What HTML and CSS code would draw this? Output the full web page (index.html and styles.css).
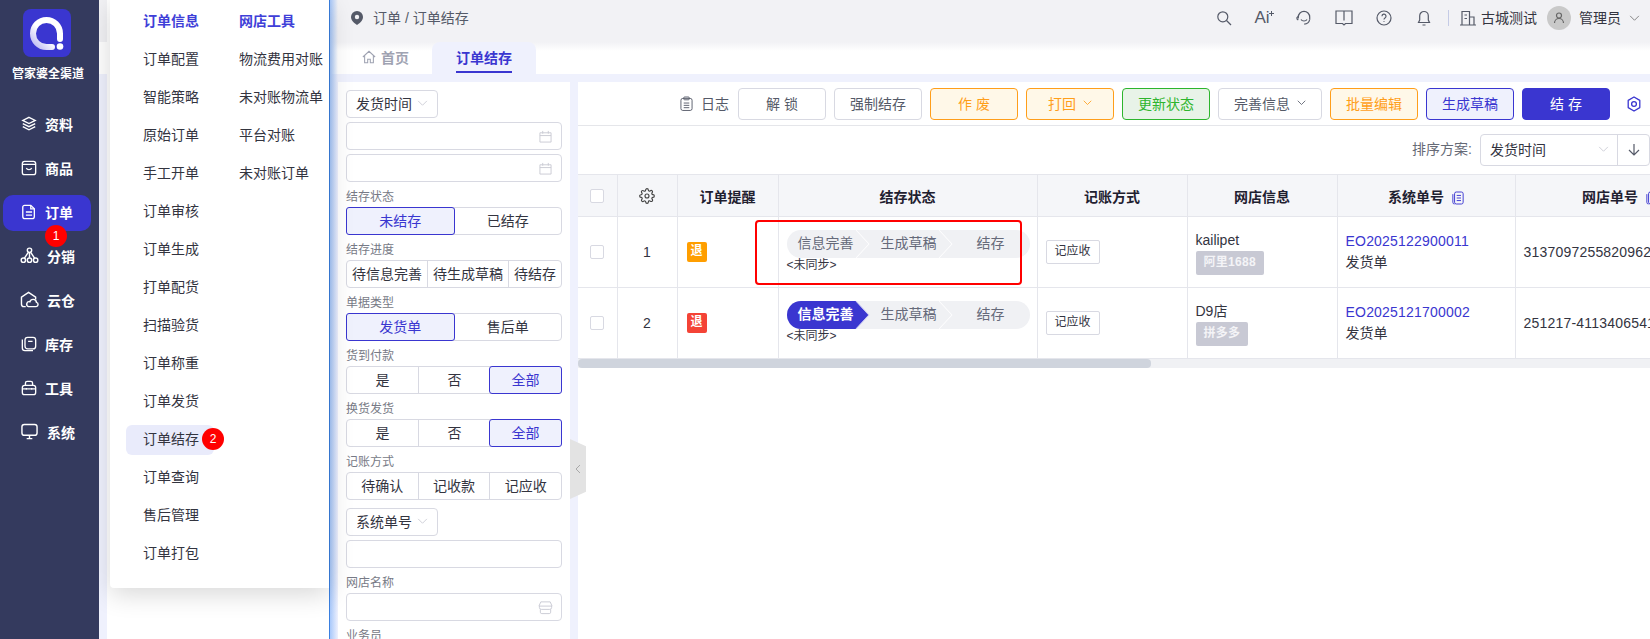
FILE: index.html
```html
<!DOCTYPE html>
<html lang="zh-CN">
<head>
<meta charset="utf-8">
<title>订单结存</title>
<link rel="stylesheet" href="styles.css">
</head>
<body>
<aside class="sidebar">
  <div class="logo">
    <svg width="48" height="48" viewBox="0 0 48 48"><defs><linearGradient id="lg" x1="0" y1="1" x2="1" y2="0"><stop offset="0" stop-color="#b9b6f2"/><stop offset=".45" stop-color="#fff"/></linearGradient></defs><path d="M29 38H23.5A13.5 13.5 0 1 1 37 24.5V30" fill="none" stroke="url(#lg)" stroke-width="6" stroke-linecap="round"/><circle cx="37" cy="37.500" r="3.300" fill="#fff"/></svg>
  </div>
  <div class="brand">管家婆全渠道</div>
  <nav class="menu">
    <a class="menu-item"><svg class="mi" viewBox="0 0 18 18"><path d="M9 1.500 16 5 9 8.500 2 5z"/><path d="M2 8.500 9 12l7-3.500"/><path d="M2 12l7 3.500 7-3.500"/></svg>资料</a>
    <a class="menu-item"><svg class="mi" viewBox="0 0 18 18"><rect x="1.500" y="1.500" width="15" height="15" rx="2.500"/><path d="M1.500 5h15M6 9c1 2.500 5 2.500 6 0"/></svg>商品</a>
    <a class="menu-item active"><svg class="mi" viewBox="0 0 18 18"><path d="M4 1.500h7l4 4V14a2.500 2.500 0 0 1-2.500 2.500h-8A2.500 2.500 0 0 1 2 14V3.500a2 2 0 0 1 2-2z"/><path d="M5.500 9h7M5.500 12.500h7M11 2v3.500h4"/></svg>订单</a>
    <a class="menu-item"><svg class="mi wide" viewBox="0 0 20 18"><circle cx="10" cy="3.500" r="2.300"/><circle cx="3.500" cy="14" r="2.300"/><circle cx="10" cy="14" r="2.300"/><circle cx="16.500" cy="14" r="2.300"/><path d="M10 6v5.500M8.500 6 4.500 12M11.500 6l4 6"/></svg>分销</a>
    <a class="menu-item"><svg class="mi wide" viewBox="0 0 20 18"><path d="M6 16.500H4a2.500 2.500 0 0 1-2.500-2.500V6.500L9 1.500l7.500 5V9"/><path d="M9 16.500h8a2.300 2.300 0 0 0 .4-4.500 3.600 3.600 0 0 0-7-.6A2.600 2.600 0 0 0 9 16.500z"/></svg>云仓</a>
    <a class="menu-item"><svg class="mi" viewBox="0 0 18 18"><rect x="4.500" y="1.500" width="12" height="13" rx="3"/><path d="M8 6h5M1.500 4v9.500a3 3 0 0 0 3 3h9"/></svg>库存</a>
    <a class="menu-item"><svg class="mi" viewBox="0 0 18 18"><rect x="1.500" y="6" width="15" height="10.500" rx="2.500"/><path d="M5 6V3.500a2 2 0 0 1 2-2h4a2 2 0 0 1 2 2V6M1.500 10h15M6 9v2M12 9v2"/></svg>工具</a>
    <a class="menu-item"><svg class="mi wide" viewBox="0 0 20 18"><rect x="2" y="1.500" width="16" height="11.500" rx="2.500"/><path d="M7 16.500h6M10 13v3.500"/></svg>系统</a>
  </nav>
</aside>

<div class="under-pane"></div>

<div class="popup">
  <ul class="popup-col">
    <li class="popup-item head">订单信息</li>
    <li class="popup-item">订单配置</li>
    <li class="popup-item">智能策略</li>
    <li class="popup-item">原始订单</li>
    <li class="popup-item">手工开单</li>
    <li class="popup-item">订单审核</li>
    <li class="popup-item">订单生成</li>
    <li class="popup-item">打单配货</li>
    <li class="popup-item">扫描验货</li>
    <li class="popup-item">订单称重</li>
    <li class="popup-item">订单发货</li>
    <li class="popup-item current">订单结存</li>
    <li class="popup-item">订单查询</li>
    <li class="popup-item">售后管理</li>
    <li class="popup-item">订单打包</li>
  </ul>
  <ul class="popup-col">
    <li class="popup-item head">网店工具</li>
    <li class="popup-item">物流费用对账</li>
    <li class="popup-item">未对账物流单</li>
    <li class="popup-item">平台对账</li>
    <li class="popup-item">未对账订单</li>
  </ul>
</div>

<span class="badge badge-one">1</span>
<span class="badge badge-two">2</span>

<main class="main">
  <header class="topbar">
    <div class="crumb">
      <svg class="pin" viewBox="0 0 12 14"><path d="M6 0a6 6 0 0 1 6 6c0 3.500-3.500 6.500-6 8-2.500-1.500-6-4.500-6-8a6 6 0 0 1 6-6z" fill="#555a68"/><circle cx="6" cy="6" r="2.200" fill="#f2f2f5"/></svg>
      <span>订单 / 订单结存</span>
    </div>
    <div class="tools">
      <span class="tool"><svg class="ti" viewBox="0 0 16 16"><circle cx="6.800" cy="6.800" r="5"/><path d="m10.500 10.500 4.500 4.500"/></svg></span>
      <span class="tool ai">Ai<svg class="spark" viewBox="0 0 8 8"><path d="M4 0v8M0 4h8"/></svg></span>
      <span class="tool"><svg class="ti" viewBox="0 0 16 16"><path d="M2.300 8.500V7a5.700 5.700 0 0 1 11.400 0v2.500"/><path d="M2.300 6.500 1 7.500v1.500l1.300 1"/><path d="M5 9.500c1.200 2 4.800 2 6 0"/><path d="M13.700 9.500c-.5 2.500-2.500 4.500-5.500 4.700"/></svg></span>
      <span class="tool"><svg class="ti book" viewBox="0 0 18 16"><path d="M1 1h16v12.500h-6.500L9 15l-1.500-1.500H1zM9 1v9.500"/></svg></span>
      <span class="tool"><svg class="ti" viewBox="0 0 16 16"><circle cx="8" cy="8" r="7"/><path d="M6 6.200a2 2 0 1 1 3 1.700c-.7.400-1 .8-1 1.600M8 11.200v.8"/></svg></span>
      <span class="tool"><svg class="ti" viewBox="0 0 16 16"><path d="M8 1.500a4.300 4.300 0 0 1 4.300 4.300V10l1.200 2.500h-11L3.700 10V5.800A4.300 4.300 0 0 1 8 1.500zM6.500 15h3"/></svg></span>
      <span class="vline"></span>
      <svg class="ti building" viewBox="0 0 16 16"><path d="M2 15V1.500h7.500V15M9.500 7H14v8M0 15h16M4.500 5h2.500M4.500 8.500h2.500"/></svg>
      <span class="org">古城测试</span>
      <span class="avatar"><svg class="ti av" viewBox="0 0 12 12"><circle cx="6" cy="3.500" r="2.500"/><path d="M1.500 11a4.500 4.500 0 0 1 9 0"/></svg></span>
      <span class="user">管理员</span>
      <svg class="chev" viewBox="0 0 12 8"><path d="m1 1 5 5 5-5"/></svg>
    </div>
  </header>

  <div class="tabs">
    <span class="tab home"><svg class="home-i" viewBox="0 0 16 16"><path d="M1 8 8 1.500 15 8M3 6.500V14.500h3.500V10.500h3v4H13V6.500"/></svg>首页</span>
    <span class="tab on"><span class="tab-label">订单结存</span></span>
  </div>

  <div class="content">
    <section class="filters">
      <div class="select"><span>发货时间</span><svg class="chev-s" viewBox="0 0 12 8"><path d="m1 1 5 5 5-5"/></svg></div>
      <div class="input"><svg class="in-i" viewBox="0 0 14 14"><path d="M1 3h12v10H1zM1 6h12M4 1v3M10 1v3"/></svg></div>
      <div class="input"><svg class="in-i" viewBox="0 0 14 14"><path d="M1 3h12v10H1zM1 6h12M4 1v3M10 1v3"/></svg></div>

      <div class="label">结存状态</div>
      <div class="seg"><span class="on">未结存</span><span>已结存</span></div>
      <div class="label">结存进度</div>
      <div class="seg seg-progress"><span>待信息完善</span><span>待生成草稿</span><span>待结存</span></div>
      <div class="label">单据类型</div>
      <div class="seg"><span class="on">发货单</span><span>售后单</span></div>
      <div class="label">货到付款</div>
      <div class="seg"><span>是</span><span>否</span><span class="on">全部</span></div>
      <div class="label">换货发货</div>
      <div class="seg"><span>是</span><span>否</span><span class="on">全部</span></div>
      <div class="label">记账方式</div>
      <div class="seg"><span>待确认</span><span>记收款</span><span>记应收</span></div>

      <div class="select select-gap"><span>系统单号</span><svg class="chev-s" viewBox="0 0 12 8"><path d="m1 1 5 5 5-5"/></svg></div>
      <div class="input"></div>
      <div class="label">网店名称</div>
      <div class="input"><svg class="in-i store" viewBox="0 0 16 16"><path d="M3 2h10l2 4.500H1zM1.500 6.500v1.500a2 2 0 0 0 2 2h9a2 2 0 0 0 2-2V6.500M2.500 10v3a1.500 1.500 0 0 0 1.500 1.500h8a1.500 1.500 0 0 0 1.500-1.500v-3"/></svg></div>
      <div class="label">业务员</div>
    </section>

    <div class="collapse"><svg class="collapse-i" viewBox="0 0 6 10"><path d="M5 1 1 5l4 4"/></svg></div>

    <section class="panel">
      <div class="toolbar">
        <span class="log"><svg class="log-i" viewBox="0 0 14 16"><rect x="1" y="2.500" width="12" height="13" rx="2"/><rect x="4" y="1" width="6" height="3" rx="1"/><path d="M4 7.500h6M4 10h6M4 12.500h6"/></svg>日志</span>
        <button class="btn">解 锁</button>
        <button class="btn">强制结存</button>
        <button class="btn warn">作 废</button>
        <button class="btn warn">打回<svg class="chev-b" viewBox="0 0 12 8"><path d="m1 1 5 5 5-5"/></svg></button>
        <button class="btn ok">更新状态</button>
        <button class="btn long">完善信息<svg class="chev-b" viewBox="0 0 12 8"><path d="m1 1 5 5 5-5"/></svg></button>
        <button class="btn warn">批量编辑</button>
        <button class="btn plain">生成草稿</button>
        <button class="btn primary">结 存</button>
        <svg class="gear blue" viewBox="0 0 16 16"><path d="M8 1l5.800 3.400v7.200L8 15l-5.800-3.400V4.400z"/><circle cx="8" cy="8" r="2.400"/></svg>
      </div>

      <div class="sortbar">
        <span class="sort-label">排序方案:</span>
        <div class="sort-select">
          <span class="sort-value">发货时间<svg class="chev-s" viewBox="0 0 12 8"><path d="m1 1 5 5 5-5"/></svg></span>
          <span class="sort-dir"><svg class="arrow" viewBox="0 0 12 12"><path d="M6 0v11M1 6l5 5 5-5"/></svg></span>
        </div>
      </div>

      <div class="table-wrap">
        <table class="grid">
          <colgroup>
            <col class="c-check"><col class="c-no"><col class="c-alert"><col class="c-status"><col class="c-acc"><col class="c-shop"><col class="c-sys"><col class="c-net">
          </colgroup>
          <thead>
            <tr>
              <th><span class="check"></span></th>
              <th><svg class="gear dark" viewBox="0 0 24 24"><circle cx="12" cy="12" r="3"/><path d="M19.400 15a1.650 1.650 0 0 0 .33 1.820l.06.06a2 2 0 0 1 0 2.830 2 2 0 0 1-2.830 0l-.06-.06a1.650 1.650 0 0 0-1.820-.33 1.650 1.650 0 0 0-1 1.510V21a2 2 0 0 1-2 2 2 2 0 0 1-2-2v-.09A1.650 1.650 0 0 0 9 19.400a1.650 1.650 0 0 0-1.820.33l-.06.06a2 2 0 0 1-2.830 0 2 2 0 0 1 0-2.830l.06-.06a1.650 1.650 0 0 0 .33-1.820 1.650 1.650 0 0 0-1.510-1H3a2 2 0 0 1-2-2 2 2 0 0 1 2-2h.09A1.650 1.650 0 0 0 4.600 9a1.650 1.650 0 0 0-.33-1.820l-.06-.06a2 2 0 0 1 0-2.830 2 2 0 0 1 2.830 0l.06.06a1.650 1.650 0 0 0 1.820.33H9a1.650 1.650 0 0 0 1-1.510V3a2 2 0 0 1 2-2 2 2 0 0 1 2 2v.09a1.650 1.650 0 0 0 1 1.510 1.650 1.650 0 0 0 1.820-.33l.06-.06a2 2 0 0 1 2.830 0 2 2 0 0 1 0 2.830l-.06.06a1.650 1.650 0 0 0-.33 1.820V9a1.650 1.650 0 0 0 1.510 1H21a2 2 0 0 1 2 2 2 2 0 0 1-2 2h-.09a1.650 1.650 0 0 0-1.510 1z"/></svg></th>
              <th>订单提醒</th>
              <th>结存状态</th>
              <th>记账方式</th>
              <th>网店信息</th>
              <th>系统单号<svg class="copy" viewBox="0 0 14 16"><rect x="3" y="1" width="10" height="14" rx="2"/><path d="M1 3.500V13a2 2 0 0 0 2 2M5.500 5h5M5.500 8h5M5.500 11h5"/></svg></th>
              <th>网店单号<svg class="copy" viewBox="0 0 14 16"><rect x="3" y="1" width="10" height="14" rx="2"/><path d="M1 3.500V13a2 2 0 0 0 2 2M5.500 5h5M5.500 8h5M5.500 11h5"/></svg></th>
            </tr>
          </thead>
          <tbody>
            <tr>
              <td class="center"><span class="check"></span></td>
              <td class="center">1</td>
              <td class="left"><span class="flag orange">退</span></td>
              <td class="left">
                <div class="steps">
                  <span class="step s1">信息完善</span><span class="step s2">生成草稿</span><span class="step s3">结存</span>
                </div>
                <div class="sync">&lt;未同步&gt;</div>
              </td>
              <td class="left"><span class="acc">记应收</span></td>
              <td class="left"><div class="line">kailipet</div><span class="shop-tag">阿里1688</span></td>
              <td class="left"><div class="line link">EO2025122900011</div><div class="line">发货单</div></td>
              <td class="left num">31370972558209624</td>
            </tr>
            <tr>
              <td class="center"><span class="check"></span></td>
              <td class="center">2</td>
              <td class="left"><span class="flag red">退</span></td>
              <td class="left">
                <div class="steps">
                  <span class="step s1 active">信息完善</span><span class="step s2">生成草稿</span><span class="step s3">结存</span>
                </div>
                <div class="sync">&lt;未同步&gt;</div>
              </td>
              <td class="left"><span class="acc">记应收</span></td>
              <td class="left"><div class="line">D9店</div><span class="shop-tag">拼多多</span></td>
              <td class="left"><div class="line link">EO2025121700002</div><div class="line">发货单</div></td>
              <td class="left num">251217-41134065412</td>
            </tr>
          </tbody>
        </table>
        <div class="highlight"></div>
      </div>
      <div class="scrollbar"><div class="thumb"></div></div>
    </section>
  </div>
</main>
</body>
</html>
```

FILE: styles.css
```css
* { box-sizing: border-box; }
html, body { margin: 0; padding: 0; }
body {
  width: 1650px;
  height: 639px;
  overflow: hidden;
  display: flex;
  position: relative;
  font-family: "Liberation Sans", "Noto Sans CJK SC", sans-serif;
  font-size: 14px;
  color: #33343f;
  background: #fff;
}
svg { display: block; flex: none; fill: none; }

/* sidebar */
.sidebar {
  width: 99px;
  flex: none;
  background: #343a5e;
  color: #fff;
  position: relative;
  z-index: 3;
  padding-top: 9px;
}
.logo {
  width: 48px;
  height: 48px;
  margin-left: 23px;
  border-radius: 8px;
  background: #3a36d0;
}
.brand {
  margin-top: 8px;
  height: 18px;
  line-height: 18px;
  font-size: 12px;
  font-weight: 700;
  text-align: center;
  padding-right: 3px;
}
.menu { margin-top: 24px; display: flex; flex-direction: column; gap: 8px; }
.menu-item {
  display: flex;
  align-items: center;
  gap: 8px;
  width: 88px;
  height: 36px;
  margin-left: 3px;
  padding: 0 0 3px 18px;
  border-radius: 10px;
  font-weight: 700;
}
.menu-item.active { background: #3a36d0; }
.mi { width: 16px; height: 16px; stroke: #fff; stroke-width: 1.500; }
.mi.wide { width: 19px; height: 17px; margin-left: -1px; }

/* area under the popup */
.under-pane {
  width: 230px;
  flex: none;
  background:
    linear-gradient(90deg, transparent 8px, #fff 8px),
    linear-gradient(#f2f2f5 42px, #fff 42px, #fff 74px, #eff1fd 74px);
}
.popup {
  position: absolute;
  left: 110px;
  top: 0;
  width: 219px;
  height: 588px;
  z-index: 2;
  display: flex;
  padding: 7px 0 0 16px;
  background: #fff;
  border-bottom-left-radius: 4px;
  box-shadow: 0 6px 26px rgba(0, 0, 0, .16);
}
.popup-col { list-style: none; margin: 0; padding: 0; width: 96px; display: flex; flex-direction: column; gap: 8px; }
.popup-item {
  width: 88px;
  height: 30px;
  line-height: 28px;
  padding-left: 17px;
  white-space: nowrap;
  border-radius: 6px;
  color: #33343f;
}
.popup-item.head { color: #3f3fd8; font-weight: 700; }
.popup-item.current { background: #e9ebfb; }
.badge {
  position: absolute;
  z-index: 4;
  width: 22px;
  height: 22px;
  border-radius: 50%;
  background: #f00;
  color: #fff;
  font-size: 12px;
  line-height: 22px;
  text-align: center;
}
.badge-one { left: 45px; top: 225px; }
.badge-two { left: 202px; top: 428px; }

/* main */
.main {
  flex: 1;
  min-width: 0;
  display: flex;
  flex-direction: column;
  position: relative;
  border-left: 1px solid #3a7fe0;
}
.main::before {
  content: "";
  position: absolute;
  left: 0;
  top: 0;
  bottom: 0;
  width: 8px;
  z-index: 1;
  background: linear-gradient(90deg, #a9c9fb, rgba(169, 201, 251, 0));
}
.topbar {
  height: 42px;
  flex: none;
  display: flex;
  justify-content: space-between;
  align-items: flex-start;
  padding: 8px 10px 0 21px;
  background: #f2f2f5;
}
.crumb { display: flex; align-items: center; gap: 10px; height: 20px; color: #555a68; }
.crumb span { padding-bottom: 2px; }
.pin { width: 12px; height: 14px; }
.tools { display: flex; align-items: center; height: 20px; }
.tool { width: 40px; height: 20px; display: flex; align-items: center; justify-content: center; }
.ti { width: 16px; height: 16px; stroke: #555a68; stroke-width: 1.200; }
.ti.book { width: 18px; }
.ai { font-size: 17px; color: #555a68; }
.spark { width: 5px; height: 5px; stroke: #555a68; stroke-width: 1.600; margin: 0 0 10px -1px; }
.vline { width: 1px; height: 16px; background: #c5cbe6; margin: 0 11px 0 4px; }
.building { margin-right: 5px; }
.org { color: #33343f; margin-right: 10px; padding-bottom: 2px; }
.avatar {
  width: 24px;
  height: 24px;
  border-radius: 50%;
  background: #c9c9c9;
  display: flex;
  align-items: center;
  justify-content: center;
  margin-right: 8px;
}
.ti.av { width: 12px; height: 12px; stroke: #666; }
.user { color: #33343f; margin-right: 8px; padding-bottom: 2px; }
.chev { width: 11px; height: 7px; stroke: #777; stroke-width: 1; }

.tabs {
  height: 32px;
  flex: none;
  display: flex;
  padding-left: 32px;
  background: linear-gradient(#f2f2f5, #fff 9px);
}
.tab { display: flex; align-items: center; font-weight: 700; }
.tab.home { width: 70px; gap: 5px; color: #9fa3b2; padding-bottom: 2px; }
.home-i { width: 14px; height: 14px; stroke: #9fa3b2; stroke-width: 1.200; }
.tab.on {
  width: 104px;
  justify-content: center;
  align-items: stretch;
  background: #eff1fd;
  border-radius: 8px 8px 0 0;
  color: #3a36d0;
}
.tab-label { display: flex; align-items: center; border-bottom: 2px solid #3a36d0; margin-bottom: 1px; }

.content {
  flex: 1;
  min-height: 0;
  display: flex;
  gap: 8px;
  padding: 8px 0 0 8px;
  background: #eff1fd;
  position: relative;
}

/* filters */
.filters {
  width: 232px;
  flex: none;
  padding: 8px 8px 0;
  background: #fff;
  overflow: hidden;
}
.select {
  width: 92px;
  height: 28px;
  display: flex;
  align-items: center;
  gap: 5px;
  padding: 0 0 2px 9px;
  border: 1px solid #d8d9e2;
  border-radius: 4px;
}
.select-gap { margin-top: 8px; }
.chev-s { width: 11px; height: 7px; stroke: #c9cad3; stroke-width: 1; }
.input {
  height: 28px;
  margin-top: 4px;
  border: 1px solid #d8d9e2;
  border-radius: 4px;
  display: flex;
  align-items: center;
  justify-content: flex-end;
  padding-right: 9px;
}
.in-i { width: 13px; height: 13px; stroke: #c9cad3; stroke-width: 1; }
.in-i.store { width: 15px; height: 15px; margin-right: -1px; }
.label + .input { margin-top: 0; }
.label {
  height: 25px;
  padding-top: 6px;
  line-height: 19px;
  font-size: 12px;
  color: #777a86;
}
.seg {
  height: 28px;
  display: flex;
  border: 1px solid #d8d9e2;
  border-radius: 4px;
}
.seg span {
  flex: 1 1 0;
  min-width: 0;
  display: flex;
  align-items: center;
  justify-content: center;
  padding-bottom: 2px;
  white-space: nowrap;
  border-left: 1px solid #d8d9e2;
  color: #33343f;
}
.seg span:first-child { border-left: 0; }
.seg span.on {
  margin: -1px;
  border: 1px solid #3a36d0;
  background: #eff1fd;
  color: #3a36d0;
  border-radius: 3px;
  position: relative;
}
.seg-progress span:nth-child(1), .seg-progress span:nth-child(2) { flex: none; width: 81px; }
.seg-progress span:nth-child(1) { width: 80px; }

.collapse {
  position: absolute;
  left: 240px;
  top: 365px;
  width: 16px;
  height: 60px;
  z-index: 1;
  background: #e3e3e3;
  clip-path: polygon(0 0, 100% 12%, 100% 88%, 0 100%);
  display: flex;
  align-items: center;
  justify-content: center;
}
.collapse-i { width: 6px; height: 10px; stroke: #a9a9a9; stroke-width: 1; }

/* right panel */
.panel { flex: 1; min-width: 0; background: #fff; }
.toolbar {
  height: 44px;
  display: flex;
  align-items: flex-start;
  justify-content: flex-end;
  gap: 8px;
  padding: 6px 8px 0 0;
  border-bottom: 1px solid #e5e6ea;
}
.log { display: flex; align-items: center; height: 32px; gap: 8px; margin-right: 1px; padding-bottom: 2px; color: #555a68; }
.log-i { width: 13px; height: 15px; stroke: #555a68; stroke-width: 1; }
.btn {
  width: 88px;
  height: 32px;
  padding: 0 0 2px;
  font: inherit;
  color: #555a68;
  background: #fff;
  border: 1px solid #d8d9e2;
  border-radius: 4px;
  display: flex;
  align-items: center;
  justify-content: center;
  gap: 7px;
}
.btn.long { width: 104px; }
.btn.warn { color: #ff9e1a; border-color: #ff9e1a; background: #fff8e8; }
.btn.ok { color: #2db52d; border-color: #2db52d; background: #e8f3e8; }
.btn.plain { color: #3a36d0; border-color: #3a36d0; background: #eff1fd; }
.btn.primary { color: #fff; border-color: #3a36d0; background: #3a36d0; }
.chev-b { width: 9px; height: 6px; stroke: currentColor; stroke-width: 1.100; }
.gear { width: 16px; height: 16px; stroke-width: 1.300; stroke-linejoin: round; }
.gear.blue { stroke: #3a36d0; margin: 8px 0 0 8px; }
.gear.dark { stroke: #444; stroke-width: 1.700; margin: 0 auto; }

.sortbar {
  height: 48px;
  display: flex;
  align-items: flex-start;
  justify-content: flex-end;
  gap: 8px;
  padding-top: 8px;
}
.sort-label { line-height: 30px; color: #666a76; }
.sort-select {
  width: 170px;
  height: 32px;
  display: flex;
  border: 1px solid #d8d9e2;
  border-radius: 4px;
}
.sort-value {
  flex: 1;
  display: flex;
  align-items: center;
  justify-content: space-between;
  padding: 0 8px 2px 9px;
  border-right: 1px solid #d8d9e2;
}
.sort-dir { width: 31px; display: flex; align-items: center; justify-content: center; }
.arrow { width: 12px; height: 12px; stroke: #555a68; stroke-width: 1.200; }

/* table */
.table-wrap { position: relative; overflow: hidden; }
.grid { table-layout: fixed; border-collapse: collapse; width: 1147px; }
.c-check { width: 39px; }
.c-no { width: 60px; }
.c-alert { width: 101px; }
.c-status { width: 259px; }
.c-acc { width: 150px; }
.c-shop { width: 150px; }
.c-sys { width: 178px; }
.c-net { width: 210px; }
.grid th, .grid td { border: 1px solid #e5e6ec; padding: 0; white-space: nowrap; }
.grid tr > :first-child { border-left: 0; }
.grid th {
  height: 42px;
  background: #f5f6f9;
  font-weight: 700;
  color: #1f2030;
  text-align: center;
}
.grid td { height: 71px; color: #33343f; }
.grid .center { text-align: center; }
.grid .left { padding-left: 8px; }
.grid .num { letter-spacing: .2px; }
.check {
  display: block;
  width: 14px;
  height: 14px;
  margin: 0 auto 0 12px;
  border: 1px solid #d8d9e2;
  border-radius: 2px;
  background: #fff;
}
.copy {
  display: inline-block;
  vertical-align: -3px;
  width: 12px;
  height: 14px;
  margin-left: 8px;
  stroke: #3a36d0;
  stroke-width: 1.100;
}
.flag {
  display: block;
  width: 20px;
  height: 20px;
  margin-left: 1px;
  border-radius: 2px;
  color: #fff;
  font-size: 12px;
  font-weight: 700;
  line-height: 19px;
  text-align: center;
}
.flag.orange { background: #ff9e00; }
.flag.red { background: #f44336; }

.steps {
  width: 243px;
  height: 28px;
  display: flex;
  border-radius: 14px;
  background: #f0f1f4;
  overflow: hidden;
}
.step {
  position: relative;
  height: 28px;
  line-height: 26px;
  color: #666a7a;
}
.step::after {
  content: "";
  position: absolute;
  top: 0;
  right: -14px;
  width: 14px;
  height: 28px;
  z-index: 2;
  background: #fff;
  clip-path: polygon(0 0, 1px 0, 14px 50%, 1px 100%, 0 100%, 13px 50%);
}
.s1 { width: 69px; padding-left: 11px; }
.s2 { width: 83px; padding-left: 25px; }
.s3 { width: 91px; padding-left: 38px; }
.s3::after { display: none; }
.step.active { color: #fff; font-weight: 700; overflow: visible; z-index: 1; }
.step.active::before {
  content: "";
  position: absolute;
  top: 0;
  left: 0;
  right: -13px;
  bottom: 0;
  z-index: -1;
  background: #3a36d0;
  clip-path: polygon(0 0, 69px 0, 82px 50%, 69px 100%, 0 100%);
}
.step.active::after { background: #c9c9f2; }
.sync { height: 16px; line-height: 15px; font-size: 12px; color: #33343f; }
.acc {
  display: block;
  width: 54px;
  height: 24px;
  line-height: 21px;
  text-align: center;
  font-size: 12px;
  border: 1px solid #d8d9e2;
  border-radius: 2px;
}
.line { line-height: 21px; }
.link { color: #3a36d0; letter-spacing: .2px; }
.shop-tag {
  display: inline-block;
  height: 24px;
  line-height: 23px;
  padding: 0 8px;
  border-radius: 2px;
  background: #c8c9d4;
  color: #f4f4f7;
  font-size: 12px;
  font-weight: 700;
  letter-spacing: .3px;
}
.highlight {
  position: absolute;
  left: 177px;
  top: 46px;
  width: 267px;
  height: 65px;
  border: 2px solid #f00;
  border-radius: 4px;
}
.scrollbar { height: 9px; background: #f0f1f4; }
.thumb { width: 573px; height: 9px; border-radius: 4px; background: #cfd4dd; }
```
